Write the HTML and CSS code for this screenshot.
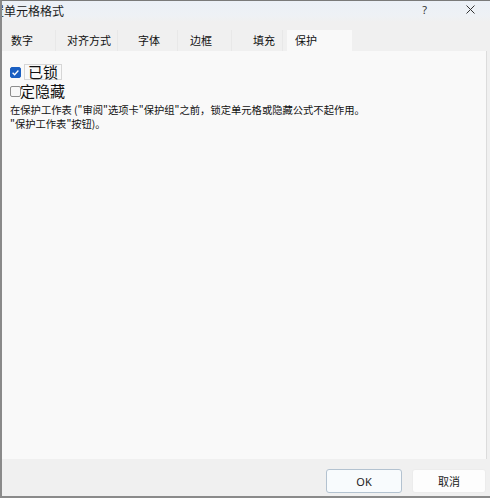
FILE: index.html
```html
<!DOCTYPE html>
<html lang="zh-CN">
<head>
<meta charset="utf-8">
<title>设置单元格格式</title>
<link rel="stylesheet" href="styles.css">
</head>
<body>
<div class="window">
  <div class="titlebar">
    <span class="title">置单元格格式</span>
    <span class="help">?</span>
    <span class="close"><svg width="9" height="9" viewBox="0 0 9 9"><path d="M0.5 0.5 L8.5 8.5 M8.5 0.5 L0.5 8.5" stroke="#333" stroke-width="1" fill="none"/></svg></span>
  </div>
  <div class="tabs">
    <div class="tab t1">数字</div>
    <div class="tab t2">对齐方式</div>
    <div class="tab t3">字体</div>
    <div class="tab t4">边框</div>
    <div class="tab t5">填充</div>
    <div class="tab t6 active">保护</div>
  </div>
  <div class="body">
    <div class="panel">
      <div class="row row-locked">
        <span class="cb checked"><svg width="11" height="11" viewBox="0 0 11 11"><path d="M2.6 5.7 L4.6 7.7 L8.4 3.5" stroke="#fff" stroke-width="1.3" fill="none"/></svg></span>
        <span class="label focus">已锁</span>
      </div>
      <div class="row row-hidden">
        <span class="cb"></span>
        <span class="label tight">定隐藏</span>
      </div>
      <p class="note">在保护工作表 ("审阅"选项卡"保护组"之前，锁定单元格或隐藏公式不起作用。<br>"保护工作表"按钮)。</p>
    </div>
  </div>
  <div class="footer">
    <button class="btn ok">OK</button>
    <button class="btn cancel">取消</button>
  </div>
</div>
</body>
</html>
```
FILE: styles.css
```css
html, body {
  margin: 0;
  padding: 0;
  background: #ffffff;
}
.window {
  width: 490px;
  height: 498px;
  box-sizing: border-box;
  border-top: 1px solid #7a7a7a;
  border-left: 2px solid #8a8a8a;
  border-bottom: 2px solid #8a8a8a;
  background: #f0f0f0;
  display: flex;
  flex-direction: column;
  font-family: "Noto Sans CJK SC", "Noto Sans", sans-serif;
  color: #1a1a1a;
  overflow: hidden;
}
.titlebar {
  height: 21px;
  flex: none;
  display: flex;
  align-items: center;
  background: linear-gradient(#ebf0f7, #eef1f5 70%, #f0f0f0);
  overflow: hidden;
}
.title {
  margin-left: -10px;
  font-size: 12px;
  line-height: 15px;
  margin-top: -3px;
}
.help {
  margin-left: auto;
  font-family: "Noto Sans", sans-serif;
  font-size: 11px;
  line-height: 12px;
  margin-top: -4px;
  margin-right: 39px;
  color: #333;
}
.close {
  display: flex;
  margin-right: 15px;
  margin-top: -5px;
}
.tabs {
  height: 29px;
  flex: none;
  display: flex;
  align-items: flex-end;
  background: #f0f0f0;
}
.tab {
  height: 21px;
  box-sizing: border-box;
  font-size: 11px;
  line-height: 21px;
  color: #111;
  border-right: 1px solid #e8e8e8;
}
.t1 { width: 54px; padding-left: 9px; }
.t2 { width: 62px; padding-left: 11px; }
.t3 { width: 60px; padding-left: 20px; }
.t4 { width: 54px; padding-left: 12px; }
.t5 { width: 51px; padding-left: 21px; }
.t6 { width: 65px; padding-left: 8px; margin-left: 4px; }
.tab.active {
  background: #f9f9f9;
  border-right: none;
}
.body {
  flex: 1;
  display: flex;
  padding-right: 3px;
}
.panel {
  flex: 1;
  background: #f9f9f9;
  border-right: 1px solid #dcdcdc;
  padding: 13px 0 0 8px;
}
.row {
  display: flex;
  align-items: center;
  height: 16px;
}
.row-hidden {
  margin-top: 3px;
}
.cb {
  width: 11px;
  height: 11px;
  box-sizing: border-box;
  border-radius: 2px;
  border: 1px solid #8c8c8c;
  background: #f7f7f7;
  display: flex;
  flex: none;
}
.cb.checked {
  background: #1a5fc2;
  border-color: #1a5fc2;
}
.cb.checked svg {
  margin: -1px;
}
.label {
  font-size: 15px;
  line-height: 16px;
  color: #111;
}
.label.focus {
  margin-left: 3px;
  padding: 0 3px;
  height: 16px;
  box-sizing: border-box;
  border: 1px solid #d6d6d6;
  line-height: 14px;
}
.label.tight {
  margin-left: -1px;
}
.note {
  margin: 4px 0 0 0;
  font-size: 10.3px;
  line-height: 14px;
  color: #111;
}
.footer {
  height: 37px;
  flex: none;
  box-sizing: border-box;
  padding: 10px 4px 3px 0;
  display: flex;
  justify-content: flex-end;
  gap: 10px;
  background: #f0f0f0;
}
.btn {
  height: 24px;
  margin: 0;
  padding: 0;
  font-family: "Noto Sans", "Noto Sans CJK SC", sans-serif;
  font-size: 11px;
  color: #222;
  border-radius: 3px;
}
.btn.ok {
  width: 76px;
  background: #f8fbfd;
  border: 1px solid #b3c2d0;
}
.btn.cancel {
  width: 74px;
  background: #fdfdfd;
  border: 1px solid #ececec;
  font-family: "Noto Sans CJK SC", sans-serif;
}
```
